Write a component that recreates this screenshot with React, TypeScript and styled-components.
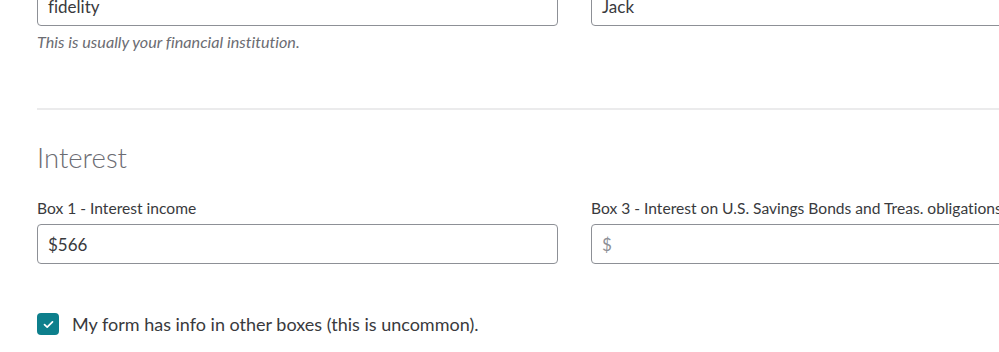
import React from "react";
import styled, { createGlobalStyle } from "styled-components";

const Global = createGlobalStyle`
  html, body { margin: 0; padding: 0; background: #ffffff; overflow: hidden; }
  body {
    font-family: Lato, "Noto Sans", sans-serif;
    color: #393a3d;
    font-variant-ligatures: none;
  }
  * { box-sizing: border-box; }
`;

const Page = styled.div`
  width: 999px;
  height: 352px;
  overflow: hidden;
  padding-left: 37px;
`;

const Inner = styled.div`
  width: 1075px;
`;

const Row = styled.div<{ $top?: number }>`
  display: grid;
  grid-template-columns: 521px 521px;
  column-gap: 33px;
  margin-top: ${(p) => p.$top ?? 0}px;
`;

const Field = styled.div`
  display: flex;
  flex-direction: column;
`;

const Label = styled.label`
  font-size: 15.6px;
  line-height: 20px;
  color: #393a3d;
  margin-bottom: 6px;
  white-space: nowrap;
`;

const Input = styled.div<{ $placeholder?: boolean }>`
  height: 40px;
  border: 1px solid #8d9096;
  border-radius: 4px;
  padding: 0 10px;
  display: flex;
  align-items: center;
  font-size: 17px;
  color: ${(p) => (p.$placeholder ? "#8d9096" : "#393a3d")};
`;

const Help = styled.div`
  font-size: 16.2px;
  font-style: italic;
  color: #6b6c72;
  margin-top: 6px;
  line-height: 20px;
`;

const Divider = styled.hr`
  border: none;
  height: 2px;
  background: #ebebec;
  margin: 56px 0 0 0;
`;

const Heading = styled.h2`
  margin: 31px 0 0 0;
  font-size: 27.5px;
  font-weight: 300;
  color: #6b6c72;
  line-height: 34px;
`;

const CheckRow = styled.label`
  display: flex;
  align-items: center;
  gap: 13px;
  margin-top: 49px;
  font-size: 18px;
  color: #393a3d;
`;

const Box = styled.span`
  width: 22px;
  height: 22px;
  border-radius: 4px;
  background: #0d7f8c;
  display: inline-flex;
  align-items: center;
  justify-content: center;
`;

export default function App() {
  return (
    <>
      <Global />
      <Page>
        <Inner>
          <Row $top={-14}>
            <Field>
              <Input>fidelity</Input>
              <Help>This is usually your financial institution.</Help>
            </Field>
            <Field>
              <Input>Jack</Input>
            </Field>
          </Row>
          <Divider />
          <Heading>Interest</Heading>
          <Row $top={23}>
            <Field>
              <Label>Box 1 - Interest income</Label>
              <Input>$566</Input>
            </Field>
            <Field>
              <Label>Box 3 - Interest on U.S. Savings Bonds and Treas. obligations</Label>
              <Input $placeholder>$</Input>
            </Field>
          </Row>
          <CheckRow>
            <Box>
              <svg width="11" height="9" viewBox="0 0 11 9">
                <path d="M1.5 4.6 L4.2 7.2 L9.5 1.8" fill="none" stroke="#fff" strokeWidth="1.7" strokeLinecap="round" strokeLinejoin="round" />
              </svg>
            </Box>
            My form has info in other boxes (this is uncommon).
          </CheckRow>
        </Inner>
      </Page>
    </>
  );
}
